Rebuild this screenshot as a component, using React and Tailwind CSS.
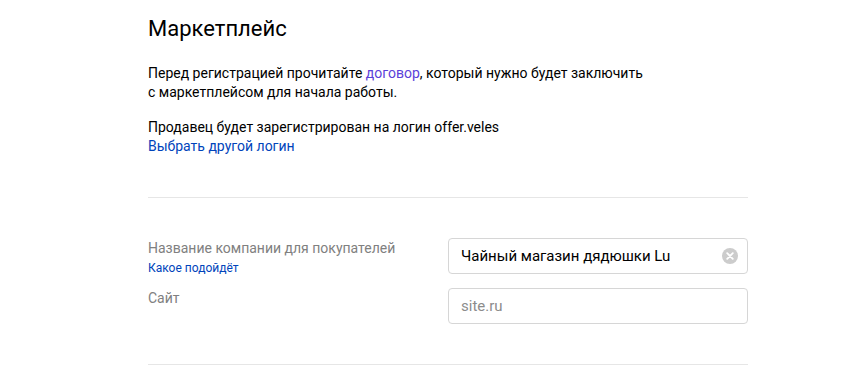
const fieldFont = { fontFamily: 'Roboto, "Liberation Sans", sans-serif' };

const ClearIcon = () => (
    <svg width="16" height="16" viewBox="0 0 16 16">
        <circle cx="8" cy="8" r="8" fill="#cccccc" />
        <path d="M5.2 5.2 L10.8 10.8 M10.8 5.2 L5.2 10.8" stroke="#fff" strokeWidth="1.8" strokeLinecap="round" />
    </svg>
);

const Field = ({ label, hint, value, placeholder }) => (
    <div className="flex items-start">
        <div className="w-[300px]">
            <div className="text-[14px] leading-[20px] text-[#808080]">{label}</div>
            {hint && <a className="block text-[12px] leading-[12px] mt-[4px] text-[#0044bb]">{hint}</a>}
        </div>
        <div className="w-[300px] h-[36px] border border-[#d6d6d6] rounded-[4px] flex items-center pl-[12px] pr-[9px]">
            <span className={value ? "flex-1 text-[15px] text-black" : "flex-1 text-[15px] text-[#8c8c8c]"}>
                {value || placeholder}
            </span>
            {value && <ClearIcon />}
        </div>
    </div>
);

export default function App() {
    return (
        <div className="w-[848px] h-[375px] bg-white overflow-hidden" style={fieldFont}>
            <div className="w-[600px] ml-[148px]">
                <h1 className="pt-[14px] text-[22px] leading-[30px] text-black">Маркетплейс</h1>
                <p className="mt-[20px] text-[14px] leading-[19px] text-black">
                    Перед регистрацией прочитайте <a className="text-[#5b3fd9]">договор</a>, который нужно будет заключить
                    <br />с маркетплейсом для начала работы.
                </p>
                <p className="mt-[16px] text-[14px] leading-[19px] text-black">
                    Продавец будет зарегистрирован на логин offer.veles
                    <br />
                    <a className="text-[#0044bb]">Выбрать другой логин</a>
                </p>
                <div className="mt-[41px] border-t border-[#e6e6e6]" />
                <div className="mt-[40px] flex flex-col gap-[14px]">
                    <Field
                        label="Название компании для покупателей"
                        hint="Какое подойдёт"
                        value="Чайный магазин дядюшки Lu"
                    />
                    <Field label="Сайт" placeholder="site.ru" />
                </div>
                <div className="mt-[40px] border-t border-[#e6e6e6]" />
            </div>
        </div>
    );
}
